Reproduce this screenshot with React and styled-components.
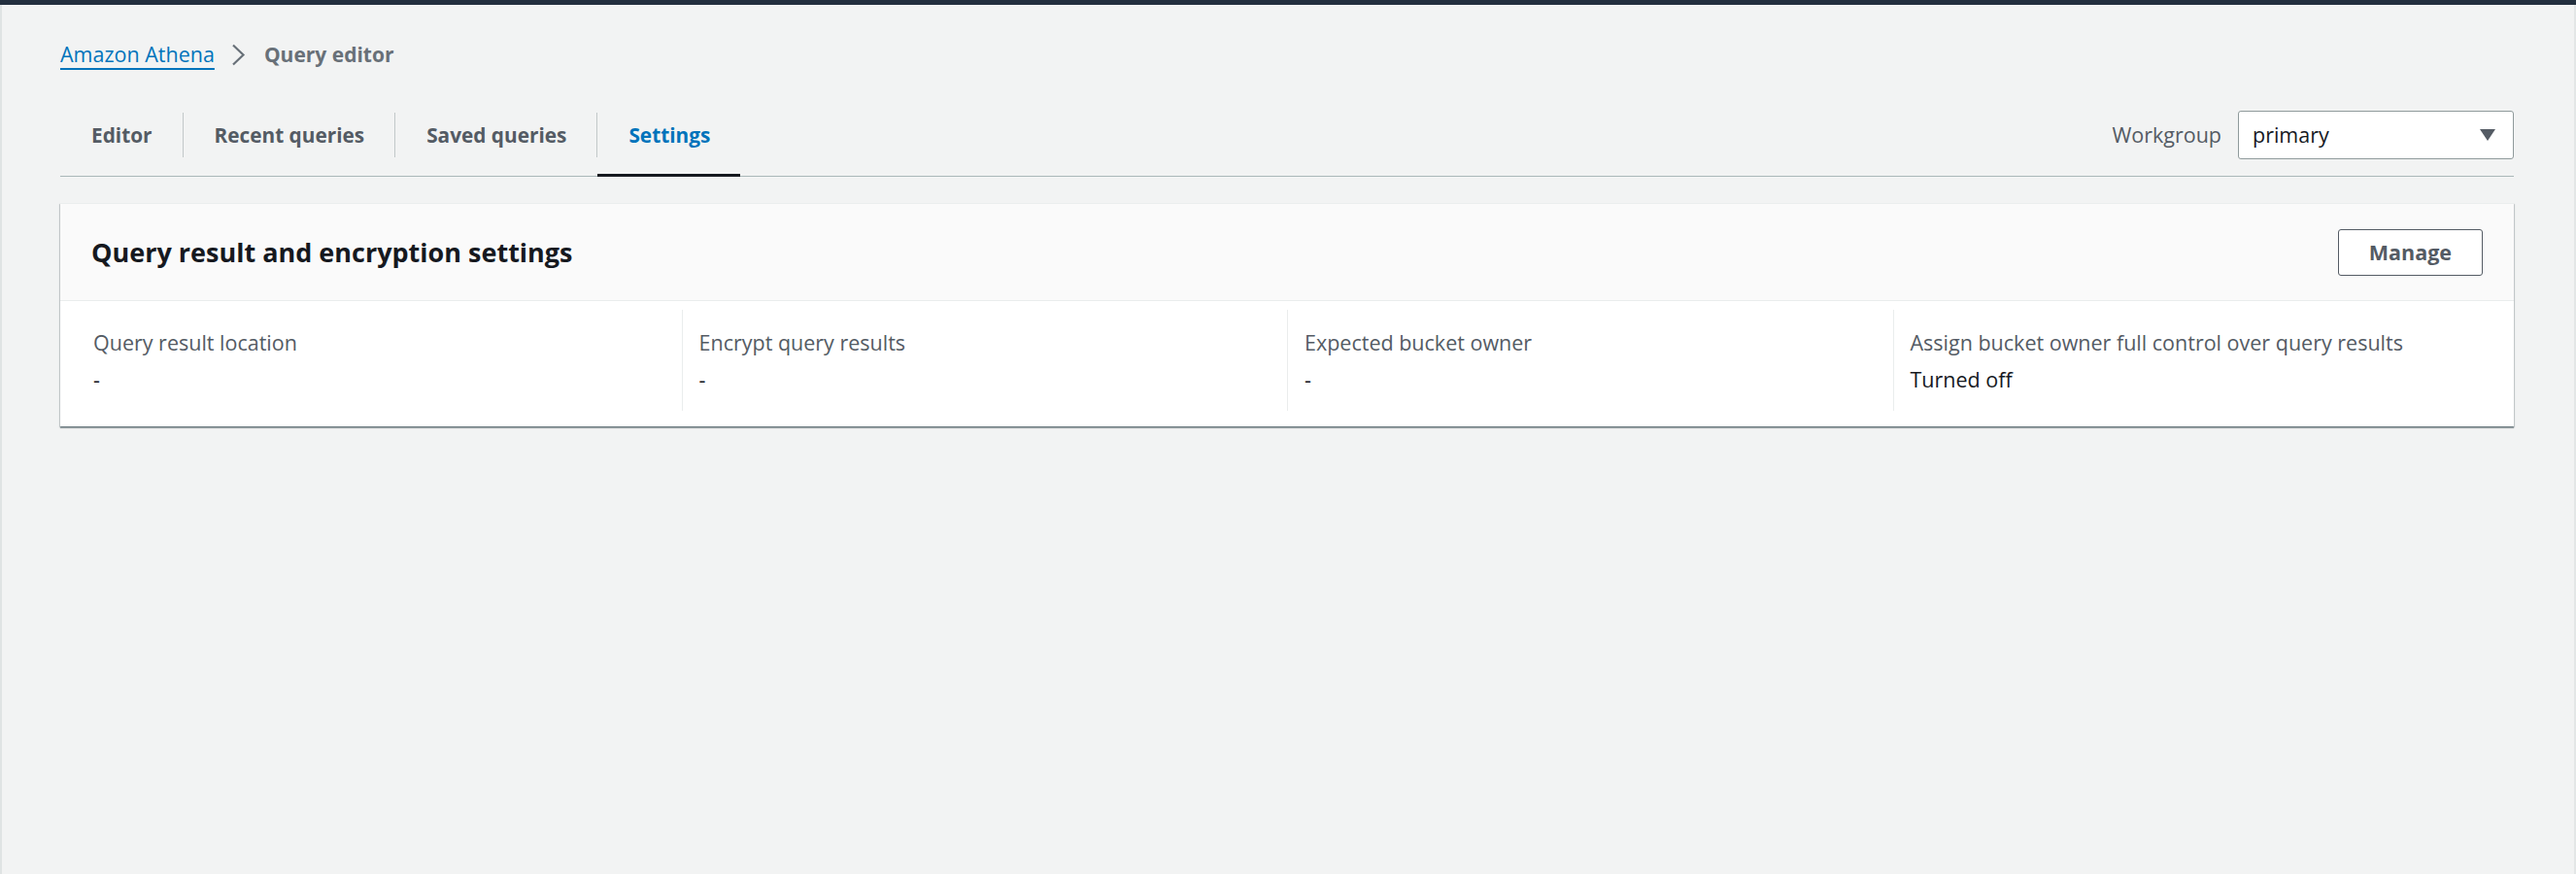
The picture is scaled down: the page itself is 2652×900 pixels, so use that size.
import React from "react";
import styled, { createGlobalStyle, css } from "styled-components";

const GlobalStyle = createGlobalStyle`
  html, body {
    margin: 0;
    padding: 0;
    height: 100%;
    background: #f2f3f3;
  }
  body {
    font-family: "Open Sans", "Noto Sans", sans-serif;
    color: #16191f;
  }
  #root {
    min-height: 100%;
  }
  * { box-sizing: border-box; }
`;

const Page = styled.div`
  min-height: 100vh;
  display: flex;
  flex-direction: column;
  border-top: 5px solid #232f3e;
`;

const Frame = styled.main`
  flex: 1;
  border-left: 2px solid #dfe3e3;
  border-right: 2px solid #e3e6e6;
  padding: 36px 62px 0 60px;
`;

const Breadcrumbs = styled.nav`
  display: flex;
  align-items: center;
  height: 30px;
  font-size: 21.5px;
  line-height: 30px;
`;

const CrumbLink = styled.a`
  color: #0073bb;
  text-decoration: underline;
  text-decoration-thickness: 2px;
  text-underline-offset: 6px;
  cursor: pointer;
`;

const CrumbSep = styled.span`
  display: flex;
  align-items: center;
  margin: 0 19px 0 17px;
  color: #687078;
`;

const CrumbCurrent = styled.span`
  font-weight: 700;
  font-size: 21px;
  color: #687078;
`;

const TabsHeader = styled.div`
  margin-top: 25px;
  display: flex;
  align-items: center;
  justify-content: space-between;
  border-bottom: 1px solid #aab7b8;
`;

const TabList = styled.div`
  display: flex;
  align-items: center;
  height: 85px;
`;

const TabDivider = styled.span`
  width: 1px;
  height: 46px;
  background: #c2c8c9;
`;

const Tab = styled.button`
  position: relative;
  height: 85px;
  display: flex;
  align-items: center;
  padding: 0 31px 0 32px;
  border: 0;
  background: transparent;
  font-family: inherit;
  font-size: 20.8px;
  font-weight: 700;
  color: #545b64;
  cursor: pointer;
  ${(p) =>
    p.$active &&
    css`
      color: #0073bb;
      &::after {
        content: "";
        position: absolute;
        left: 0;
        right: 0;
        bottom: -1px;
        height: 3px;
        background: #16191f;
      }
    `}
`;

const Workgroup = styled.div`
  display: flex;
  align-items: center;
  gap: 17px;
`;

const WorkgroupLabel = styled.span`
  font-size: 21.5px;
  color: #545b64;
`;

const Select = styled.div`
  width: 284px;
  height: 50px;
  display: flex;
  align-items: center;
  justify-content: space-between;
  padding: 0 18px 0 14px;
  background: #fff;
  border: 1px solid #8f9a9b;
  border-radius: 3px;
  font-size: 21.5px;
  color: #16191f;
`;

const Card = styled.section`
  margin-top: 27px;
  background: #fff;
  border-top: 1px solid #eaeded;
  box-shadow: 0 2px 1px 0 rgba(0, 28, 36, 0.35),
    1px 1px 1px 0 rgba(0, 28, 36, 0.15), -1px 1px 1px 0 rgba(0, 28, 36, 0.15);
`;

const CardHeader = styled.header`
  height: 100px;
  display: flex;
  align-items: center;
  justify-content: space-between;
  padding: 0 32px;
  background: #fafafa;
  border-bottom: 1px solid #eaeded;
`;

const CardTitle = styled.h2`
  margin: 0;
  font-size: 27px;
  font-weight: 700;
  color: #16191f;
  line-height: 36px;
`;

const Button = styled.button`
  height: 48px;
  padding: 0 31px;
  background: #fff;
  border: 1px solid #545b64;
  border-radius: 3px;
  font-family: inherit;
  font-size: 21.5px;
  font-weight: 700;
  color: #545b64;
  cursor: pointer;
`;

const CardBody = styled.div`
  padding: 9px 16px 16px;
  display: grid;
  grid-template-columns: repeat(4, 1fr);
`;

const Column = styled.div`
  padding: 19px 17px 17px;
  border-left: 1px solid ${(p) => (p.$first ? "transparent" : "#eaeded")};
`;

const Label = styled.div`
  font-size: 21.5px;
  line-height: 30px;
  color: #545b64;
`;

const Value = styled.div`
  margin-top: 8px;
  font-size: 21.5px;
  line-height: 30px;
  color: #16191f;
`;

const tabs = ["Editor", "Recent queries", "Saved queries", "Settings"];

const fields = [
  { label: "Query result location", value: "-" },
  { label: "Encrypt query results", value: "-" },
  { label: "Expected bucket owner", value: "-" },
  { label: "Assign bucket owner full control over query results", value: "Turned off" },
];

export default function App() {
  return (
    <>
      <GlobalStyle />
      <Page>
        <Frame>
          <Breadcrumbs>
            <CrumbLink>Amazon Athena</CrumbLink>
            <CrumbSep>
              <svg width="15" height="23" viewBox="0 0 15 23" fill="none">
                <path d="M2 1.5 L12.5 11.5 L2 21.5" stroke="#687078" strokeWidth="2.2" />
              </svg>
            </CrumbSep>
            <CrumbCurrent>Query editor</CrumbCurrent>
          </Breadcrumbs>

          <TabsHeader>
            <TabList>
              {tabs.map((t, i) => (
                <React.Fragment key={t}>
                  {i > 0 && <TabDivider />}
                  <Tab $active={t === "Settings"}>{t}</Tab>
                </React.Fragment>
              ))}
            </TabList>
            <Workgroup>
              <WorkgroupLabel>Workgroup</WorkgroupLabel>
              <Select>
                <span>primary</span>
                <svg width="16" height="12" viewBox="0 0 16 12">
                  <path d="M0 0 H16 L8 12 Z" fill="#545b64" />
                </svg>
              </Select>
            </Workgroup>
          </TabsHeader>

          <Card>
            <CardHeader>
              <CardTitle>Query result and encryption settings</CardTitle>
              <Button>Manage</Button>
            </CardHeader>
            <CardBody>
              {fields.map((f, i) => (
                <Column key={f.label} $first={i === 0}>
                  <Label>{f.label}</Label>
                  <Value>{f.value}</Value>
                </Column>
              ))}
            </CardBody>
          </Card>
        </Frame>
      </Page>
    </>
  );
}
